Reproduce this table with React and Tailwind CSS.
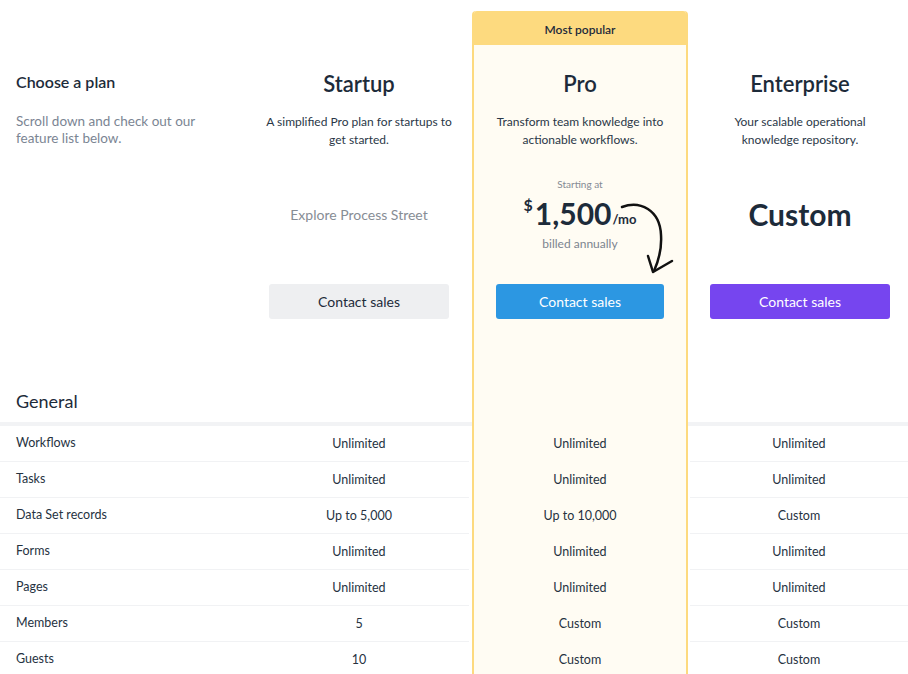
import React from "react";

const rows = [
  ["Workflows", "Unlimited", "Unlimited", "Unlimited"],
  ["Tasks", "Unlimited", "Unlimited", "Unlimited"],
  ["Data Set records", "Up to 5,000", "Up to 10,000", "Custom"],
  ["Forms", "Unlimited", "Unlimited", "Unlimited"],
  ["Pages", "Unlimited", "Unlimited", "Unlimited"],
  ["Members", "5", "Custom", "Custom"],
  ["Guests", "10", "Custom", "Custom"],
];

function PlanHeader({ title, desc, children, button }) {
  return (
    <div className="flex flex-col items-center">
      <div className="mt-[25px] h-[28px] text-[22px] leading-[28px] font-semibold text-[#1d2b3a]">{title}</div>
      <div className="mt-[15px] h-[36px] text-center text-[12px] leading-[18px] text-[#2a3747] whitespace-nowrap">{desc}</div>
      <div className="h-[130px] w-full flex flex-col items-center justify-center">{children}</div>
      <div className="mt-[5px] w-full">{button}</div>
    </div>
  );
}

function Rows({ col, lined }) {
  return (
    <div className="flex flex-col">
      {rows.map((r, i) => (
        <div
          key={i}
          className={
            "h-[36px] pt-[1px] flex items-center justify-center text-[12.5px] text-[#26323f] " +
            (lined ? "border-b border-[#f1f2f4]" : "")
          }
        >
          {r[col]}
        </div>
      ))}
    </div>
  );
}

export default function App() {
  return (
    <div className="relative w-[908px] h-[674px] overflow-hidden bg-white font-['Lato',sans-serif] text-[#1d2b3a]">
      <div className="flex">
        {/* Label column */}
        <div className="w-[249px] shrink-0 flex flex-col">
          <div className="h-[45px]" />
          <div className="mt-[23px] h-[28px] pl-4 text-[16px] leading-[28px] font-semibold text-[#1d2b3a]">Choose a plan</div>
          <div className="mt-[17px] h-[34px] pl-4 text-[13.5px] leading-[17px] text-[#7b8593] w-[200px]">
            Scroll down and check out our feature list below.
          </div>
          <div className="h-[172px]" />
          <div className="h-[103px] flex items-end pl-4 pb-[9px] text-[18px] leading-[24px] text-[#1d2b3a]">General</div>
          <div className="h-[4px] bg-[#f2f3f5]" />
          <div className="flex flex-col">
            {rows.map((r, i) => (
              <div key={i} className="h-[36px] flex items-center pl-4 text-[12.5px] text-[#26323f] border-b border-[#f1f2f4]">
                {r[0]}
              </div>
            ))}
          </div>
        </div>

        {/* Startup */}
        <div className="w-[220px] shrink-0 flex flex-col">
          <div className="h-[45px]" />
          <div className="px-5">
            <PlanHeader
              title="Startup"
              desc={<>A simplified Pro plan for startups to<br />get started.</>}
              button={
                <button className="w-full h-[35px] rounded-[3px] bg-[#eeeff1] text-[14px] text-[#1d2b3a]">Contact sales</button>
              }
            >
              <div className="mt-[1px] text-[14px] text-[#878d95]">Explore Process Street</div>
            </PlanHeader>
          </div>
          <div className="h-[103px]" />
          <div className="-mr-[4px] h-[4px] bg-[#f2f3f5]" />
          <div className="-mr-[4px] pr-[4px]">
            <Rows col={1} lined />
          </div>
        </div>

        {/* Pro */}
        <div className="w-[221px] shrink-0 pl-[3px] pr-[2px]">
          <div className="relative mt-[11px] h-[700px] rounded-t-[4px] border-x-2 border-[#fdda7f] bg-[#fffcf3] flex flex-col">
            <div className="h-[34px] pt-[3px] bg-[#fdda7f] flex items-center justify-center text-[12px] font-semibold text-[#1d2b3a] rounded-t-[3px]">
              Most popular
            </div>
            <div className="px-[22px]">
              <PlanHeader
                title="Pro"
                desc={<>Transform team knowledge into<br />actionable workflows.</>}
                button={
                  <button className="w-full h-[35px] rounded-[3px] bg-[#2c97e2] text-[14px] text-white">Contact sales</button>
                }
              >
                <div className="text-[10px] leading-[14px] text-[#858b94]">Starting at</div>
                <div className="flex items-start mt-[3px] h-[38px]">
                  <span className="text-[16px] font-bold leading-[20px] mt-[1px] mr-[2px]">$</span>
                  <span className="text-[30px] font-bold leading-[38px]">1,500</span>
                  <span className="text-[13px] font-bold leading-[20px] mt-[15px] ml-[1px]">/mo</span>
                </div>
                <div className="mt-[4px] text-[12px] leading-[16px] text-[#7c848f]">billed annually</div>
              </PlanHeader>
            </div>
            <div className="h-[107px]" />
            <Rows col={2} />
          </div>
        </div>

        {/* Enterprise */}
        <div className="flex-1 flex flex-col pl-5 pr-[18px]">
          <div className="h-[45px]" />
          <PlanHeader
            title="Enterprise"
            desc={<>Your scalable operational<br />knowledge repository.</>}
            button={
              <button className="w-full h-[35px] rounded-[3px] bg-[#7645ef] text-[14px] text-white">Contact sales</button>
            }
          >
            <div className="text-[30px] font-bold leading-[38px] text-[#1d2b3a]">Custom</div>
          </PlanHeader>
          <div className="h-[103px]" />
          <div className="-ml-[22px] -mr-[18px] h-[4px] bg-[#f2f3f5]" />
          <div className="-ml-[22px] -mr-[18px] pl-[2px]">
            <Rows col={3} lined />
          </div>
        </div>
      </div>

      <svg className="absolute left-0 top-0 pointer-events-none" width="908" height="674" viewBox="0 0 908 674">
        <path d="M622,207 C640,200 660,210 661,235 C662,250 658,262 654,271" fill="none" stroke="#111" strokeWidth="2.5" strokeLinecap="round" />
        <path d="M648,256 L653,272 L672,261" fill="none" stroke="#111" strokeWidth="2.5" strokeLinecap="round" strokeLinejoin="round" />
      </svg>
    </div>
  );
}
